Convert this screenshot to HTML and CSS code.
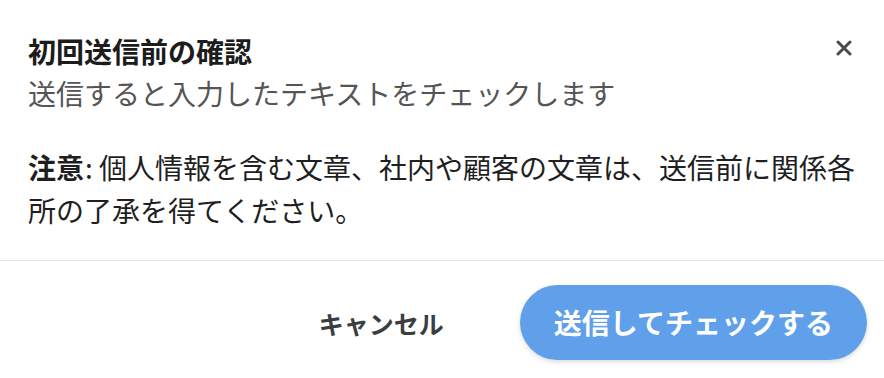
FILE: index.html
```html
<!DOCTYPE html>
<html lang="ja">
<head>
<meta charset="utf-8">
<link rel="stylesheet" href="styles.css">
</head>
<body>
<div class="dialog">
  <div class="content">
    <div class="header">
      <div class="titles">
        <div class="title">初回送信前の確認</div>
        <div class="subtitle">送信すると入力したテキストをチェックします</div>
      </div>
      <button class="close" aria-label="閉じる">
        <svg width="16" height="16" viewBox="0 0 16 16"><path d="M2 2 L14 14 M14 2 L2 14" stroke="#4a4a4a" stroke-width="3" stroke-linecap="round" fill="none"/></svg>
      </button>
    </div>
    <p class="note"><strong class="label">注意</strong>: 個人情報を含む文章、社内や顧客の文章は、送信前に関係各所の了承を得てください。</p>
  </div>
  <div class="footer">
    <button class="btn-cancel">キャンセル</button>
    <button class="btn-primary">送信してチェックする</button>
  </div>
</div>
</body>
</html>
```
FILE: styles.css
```css
html, body {
  margin: 0;
  padding: 0;
  background: #ffffff;
}
body {
  font-family: "Noto Sans CJK JP", "Noto Sans", sans-serif;
  width: 884px;
  height: 378px;
  overflow: hidden;
}
.dialog {
  width: 884px;
  height: 378px;
  display: flex;
  flex-direction: column;
  background: #fff;
}
.content {
  padding: 30px 28px 28px 28px;
  border-bottom: 1px solid #e3e3e3;
}
.header {
  display: flex;
  justify-content: space-between;
  align-items: flex-start;
}
.title {
  font-size: 28px;
  line-height: 42px;
  font-weight: 700;
  color: #1c1c1c;
}
.subtitle {
  font-size: 28px;
  line-height: 42px;
  color: #555555;
}
.close {
  background: none;
  border: none;
  padding: 0;
  margin: 10px 4px 0 0;
  width: 16px;
  height: 16px;
  display: flex;
  cursor: pointer;
}
.note {
  margin: 32px 0 0 0;
  font-size: 28px;
  line-height: 43px;
  color: #1f1f1f;
}
.note .label {
  display: inline-block;
  font-weight: 700;
  margin-right: 1px;
}
.footer {
  display: flex;
  justify-content: flex-end;
  align-items: center;
  gap: 56px;
  padding: 24px 17px 18px 17px;
}
.btn-cancel {
  font-family: inherit;
  background: none;
  border: none;
  font-size: 25px;
  line-height: 42px;
  font-weight: 700;
  color: #3a3d42;
  padding: 0 20px;
}
.btn-primary {
  font-family: inherit;
  background: #609fea;
  border: none;
  border-radius: 38px;
  color: #ffffff;
  font-size: 28px;
  font-weight: 700;
  line-height: 43px;
  padding: 16px 34px;
  box-shadow: 0 2px 5px rgba(0, 0, 0, 0.15);
}
```
